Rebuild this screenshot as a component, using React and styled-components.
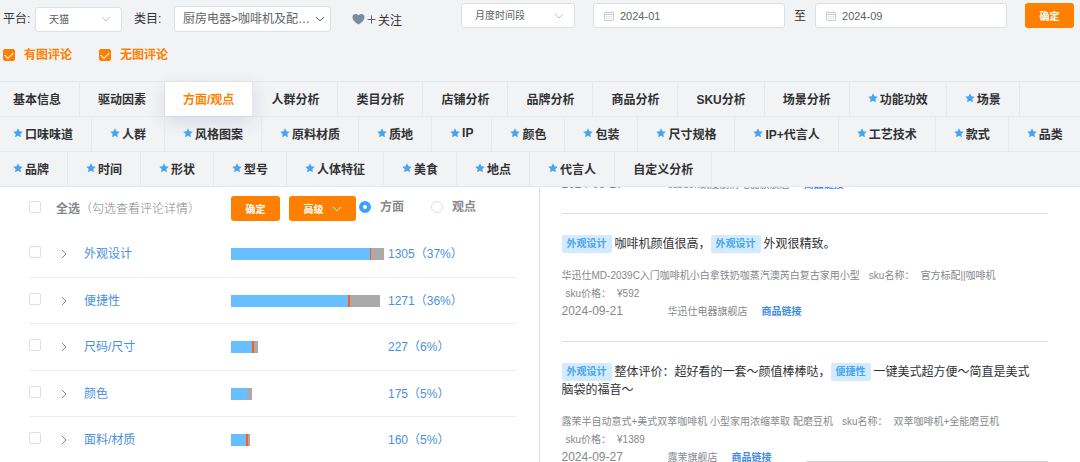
import React, { useState } from 'react';
import styled, { createGlobalStyle } from 'styled-components';

const filterTabs = [
    [
        { name: '基本信息' },
        { name: '驱动因素' },
        { name: '方面/观点' },
        { name: '人群分析' },
        { name: '类目分析' },
        { name: '店铺分析' },
        { name: '品牌分析' },
        { name: '商品分析' },
        { name: 'SKU分析' },
        { name: '场景分析' },
        { name: '功能功效', star: true },
        { name: '场景', star: true },
    ],
    [
        { name: '口味味道', star: true },
        { name: '人群', star: true },
        { name: '风格图案', star: true },
        { name: '原料材质', star: true },
        { name: '质地', star: true },
        { name: 'IP', star: true },
        { name: '颜色', star: true },
        { name: '包装', star: true },
        { name: '尺寸规格', star: true },
        { name: 'IP+代言人', star: true },
        { name: '工艺技术', star: true },
        { name: '款式', star: true },
        { name: '品类', star: true },
    ],
    [
        { name: '品牌', star: true },
        { name: '时间', star: true },
        { name: '形状', star: true },
        { name: '型号', star: true },
        { name: '人体特征', star: true },
        { name: '美食', star: true },
        { name: '地点', star: true },
        { name: '代言人', star: true },
        { name: '自定义分析' },
    ],
];

// good / bad / neutral are bar lengths
const aspects = [
    { name: '外观设计', count: 1305, percent: 37, good: 139, bad: 1, neutral: 13 },
    { name: '便捷性', count: 1271, percent: 36, good: 117, bad: 2, neutral: 30 },
    { name: '尺码/尺寸', count: 227, percent: 6, good: 21, bad: 2, neutral: 4 },
    { name: '颜色', count: 175, percent: 5, good: 16, bad: 0, neutral: 5 },
    { name: '面料/材质', count: 160, percent: 5, good: 15, bad: 2, neutral: 2 },
];

const reviews = [
    {
        parts: [{ tag: '外观设计' }, { text: '咖啡机颜值很高，' }, { tag: '外观设计' }, { text: '外观很精致。' }],
        product: '华迅仕MD-2039C入门咖啡机小白拿铁奶咖蒸汽澳芮白复古家用小型',
        sku: '官方标配||咖啡机',
        price: '¥592',
        date: '2024-09-21',
        shop: '华迅仕电器旗舰店',
    },
    {
        parts: [
            { tag: '外观设计' },
            { text: '整体评价：超好看的一套～颜值棒棒哒，' },
            { tag: '便捷性' },
            { text: '一键美式超方便～简直是美式脑袋的福音～' },
        ],
        product: '露茉半自动意式+美式双萃咖啡机 小型家用浓缩萃取 配磨豆机',
        sku: '双萃咖啡机+全能磨豆机',
        price: '¥1389',
        date: '2024-09-27',
        shop: '露茉旗舰店',
    },
];

function Chevron({ size = 10, right }) {
    return (
        <svg width={size} height={size} viewBox="0 0 10 10" fill="none" stroke="currentColor" aria-hidden="true">
            <path d={right ? 'M3 1l4 4-4 4' : 'M1 3l4 4 4-4'} />
        </svg>
    )
}

function Star() {
    return (
        <StarIcon viewBox="0 0 20 20" aria-hidden="true">
            <path d="M10 .5l2.900 6 6.600.900-4.800 4.500 1.200 6.600L10 15.400l-5.900 3.100 1.200-6.600L.5 7.400l6.600-.900z" />
        </StarIcon>
    )
}

function CalendarIcon() {
    return (
        <svg width="10" height="10" viewBox="0 0 10 10" fill="none" stroke="#c0c4cc" aria-hidden="true">
            <path d="M.5 1.5h9v8h-9zM.5 3.5h9M2.5 0v2M7.5 0v2" strokeWidth=".8" />
            <path d="M2 5.5h6M2 7.5h6" strokeDasharray="1.2 1.2" strokeWidth=".8" />
        </svg>
    )
}

function MonthField({ label, value }) {
    return (
        <MonthBox>
            <CalendarIcon />
            <MonthInput aria-label={label} defaultValue={value} />
        </MonthBox>
    )
}

function ReviewFooter({ date, shop }) {
    return (
        <Footer>
            <DateText>{date}</DateText>
            <span>{shop}</span>
            <ProductLink href="#">商品链接</ProductLink>
        </Footer>
    )
}

function Review({ review }) {
    return (
        <ReviewItem>
            <ReviewText>
                {review.parts.map((part, i) =>
                    part.tag ? <Tag key={i}>{part.tag}</Tag> : <span key={i}>{part.text}</span>
                )}
            </ReviewText>
            <ProductInfo>
                {review.product}
                <InfoField>sku名称：</InfoField>
                <InfoValue>{review.sku}</InfoValue>
                <PriceLine>
                    sku价格：
                    <InfoValue>{review.price}</InfoValue>
                </PriceLine>
            </ProductInfo>
            <ReviewFooter date={review.date} shop={review.shop} />
        </ReviewItem>
    )
}

function App() {
    const [active, setActive] = useState('方面/观点');

    return (
        <Page>
            <GlobalStyle />
            <Header>
                <Toolbar>
                    <Filters>
                        <FieldLabel htmlFor="platform">平台:</FieldLabel>
                        <SelectBox $width="87px">
                            <Select id="platform">
                                <option>天猫</option>
                            </Select>
                            <Chevron />
                        </SelectBox>
                        <CategoryLabel htmlFor="category">类目:</CategoryLabel>
                        <SelectBox $width="157px" $large>
                            <Select id="category" $large>
                                <option>厨房电器&gt;咖啡机及配…</option>
                            </Select>
                            <Chevron />
                        </SelectBox>
                        <FollowButton>
                            <svg width="13" height="12" viewBox="0 0 14 12" fill="#7b8ba1" aria-hidden="true">
                                <path d="M7 12C3.5 9.800.5 7.200.5 3.900.5 1.700 2 .5 3.800.5 5.200.5 6.300 1.100 7 2 7.700 1.100 8.800.5 10.200.5 12 .5 13.500 1.700 13.500 3.900 13.500 7.200 10.500 9.800 7 12z" />
                            </svg>
                            <svg width="9" height="9" viewBox="0 0 9 9" stroke="#606266" aria-hidden="true">
                                <path d="M4.500.5v8M.5 4.500h8" />
                            </svg>
                            关注
                        </FollowButton>
                    </Filters>
                    <Period>
                        <SelectBox $width="114px">
                            <Select aria-label="时间段">
                                <option>月度时间段</option>
                            </Select>
                            <Chevron />
                        </SelectBox>
                        <Range>
                            <MonthField label="开始月份" value="2024-01" />
                            至
                            <MonthField label="结束月份" value="2024-09" />
                        </Range>
                        <OrangeButton>确定</OrangeButton>
                    </Period>
                </Toolbar>
                <CommentTypes>
                    <TypeLabel>
                        <Checkbox defaultChecked />
                        有图评论
                    </TypeLabel>
                    <TypeLabel>
                        <Checkbox defaultChecked />
                        无图评论
                    </TypeLabel>
                </CommentTypes>
                <nav>
                    {filterTabs.map((row, i) => (
                        <TabRow key={i}>
                            {row.map((tab) => (
                                <Tab key={tab.name} $active={tab.name === active} onClick={() => setActive(tab.name)}>
                                    {tab.star && <Star />}
                                    {tab.name}
                                </Tab>
                            ))}
                        </TabRow>
                    ))}
                </nav>
            </Header>
            <Content>
                <AspectPanel>
                    <AspectToolbar>
                        <SelectAll>
                            <ListCheckbox />
                            <span><b>全选</b>（勾选查看评论详情）</span>
                        </SelectAll>
                        <OrangeButton>确定</OrangeButton>
                        <AdvancedButton>
                            高级
                            <Chevron />
                        </AdvancedButton>
                        <RadioLabel>
                            <Radio name="level" defaultChecked />
                            方面
                        </RadioLabel>
                        <RadioLabel>
                            <Radio name="level" />
                            观点
                        </RadioLabel>
                    </AspectToolbar>
                    <AspectList>
                        {aspects.map((item) => (
                            <AspectRow key={item.name}>
                                <ListCheckbox aria-label={item.name} />
                                <ExpandButton aria-label="展开">
                                    <Chevron right />
                                </ExpandButton>
                                <AspectLink href="#">{item.name}</AspectLink>
                                <Bar>
                                    <Segment $color="#67bfff" style={{ width: item.good }} />
                                    <Segment $color="#ff5a26" style={{ width: item.bad }} />
                                    <Segment $color="#aaaaaa" style={{ width: item.neutral }} />
                                </Bar>
                                <AspectLink href="#">
                                    {item.count}（{item.percent}%）
                                </AspectLink>
                            </AspectRow>
                        ))}
                    </AspectList>
                </AspectPanel>
                <ReviewPanel>
                    <ReviewList>
                        <ReviewItem $cut>
                            <ReviewFooter date="2024-09-27" shop="casdon凯度厨房电器旗舰店" />
                        </ReviewItem>
                        {reviews.map((review) => (
                            <Review key={review.shop} review={review} />
                        ))}
                    </ReviewList>
                    <Popup />
                </ReviewPanel>
            </Content>
        </Page>
    )
}

export default App

const GlobalStyle = createGlobalStyle`
    * {
        box-sizing: border-box;
    }
    body {
        margin: 0;
        background-color: white;
        color: #303133;
        font-family: "Liberation Sans", "Noto Sans CJK SC", sans-serif;
        font-size: 12px;
        line-height: 18px;
    }
    button, input, select {
        margin: 0;
        font-family: inherit;
        color: inherit;
    }
    a {
        text-decoration: none;
    }
`

const Page = styled.div`
    display: flex;
    flex-direction: column;
    height: 100vh;
    overflow: hidden;
`

const Header = styled.header`
    background-color: #f2f3f5;
`

const Toolbar = styled.div`
    display: flex;
    align-items: flex-start;
    padding: 3px 6px 0 3px;
`

const Filters = styled.div`
    display: flex;
    align-items: center;
    padding-top: 3px;
    width: 458px;
    flex-shrink: 0;
`

const FieldLabel = styled.label`
    width: 32px;
`

const CategoryLabel = styled(FieldLabel)`
    width: 40px;
    margin-left: 12px;
`

const SelectBox = styled.div`
    display: flex;
    align-items: center;
    width: ${(props) => props.$width};
    height: ${(props) => (props.$large ? 26 : 25)}px;
    padding-right: ${(props) => (props.$large ? 5 : 10)}px;
    border: 1px solid #dcdfe6;
    border-radius: 3px;
    background-color: white;
    color: ${(props) => (props.$large ? '#606266' : '#c0c4cc')};
    flex-shrink: 0;
`

const Select = styled.select`
    appearance: none;
    flex: 1;
    min-width: 0;
    padding: 0 0 0 ${(props) => (props.$large ? 8 : 13)}px;
    border: none;
    background: none;
    color: #606266;
    font-size: ${(props) => (props.$large ? 12 : 10)}px;
`

const FollowButton = styled.button`
    display: flex;
    align-items: center;
    gap: 2px;
    margin-left: 21px;
    padding: 0;
    border: none;
    background: none;
    font-size: 12px;
`

const Period = styled.div`
    display: flex;
    flex: 1;
    gap: 18px;
`

const Range = styled.div`
    display: flex;
    align-items: center;
    flex: 1;
    gap: 9px;
`

const MonthBox = styled.div`
    display: flex;
    align-items: center;
    flex: 1;
    gap: 6px;
    height: 25px;
    padding: 0 10px;
    border: 1px solid #dcdfe6;
    border-radius: 3px;
    background-color: white;
`

const MonthInput = styled.input`
    flex: 1;
    min-width: 0;
    padding: 0;
    border: none;
    outline: none;
    color: #606266;
    font-size: 11px;
`

const OrangeButton = styled.button`
    display: flex;
    align-items: center;
    justify-content: center;
    width: 49px;
    height: 25px;
    padding: 0;
    border: none;
    border-radius: 3px;
    background-color: #ff8000;
    color: white;
    font-size: 10px;
    font-weight: bold;
    cursor: pointer;
    flex-shrink: 0;
`

const AdvancedButton = styled(OrangeButton)`
    gap: 8px;
    width: 67px;
    margin-left: 9px;
`

const CommentTypes = styled.div`
    display: flex;
    gap: 27px;
    padding: 14px 3px 17px;
`

const TypeLabel = styled.label`
    display: flex;
    align-items: center;
    gap: 9px;
    color: #ff8000;
    font-weight: bold;
`

const Checkbox = styled.input.attrs({ type: 'checkbox' })`
    appearance: none;
    display: flex;
    align-items: flex-start;
    justify-content: center;
    width: 12px;
    height: 12px;
    padding-top: 2px;
    border: 1px solid #dcdfe6;
    border-radius: 2px;
    background-color: white;
    flex-shrink: 0;

    &:checked {
        border-color: #ff8000;
        background-color: #ff8000;
    }
    &:checked::after {
        content: '';
        width: 7px;
        height: 4px;
        border-left: 1px solid white;
        border-bottom: 1px solid white;
        transform: rotate(-45deg);
    }
`

const ListCheckbox = styled(Checkbox)`
    margin-bottom: 4px;
`

const TabRow = styled.div`
    display: flex;
    height: 35px;
    border-top: 1px solid #e6e8ee;

    &:last-child {
        height: 36px;
        border-bottom: 1px solid #e6e8ee;
    }
`

const Tab = styled.button`
    display: flex;
    align-items: center;
    padding: 0 18px 2px;
    border: none;
    border-right: 1px solid #e6e8ee;
    background-color: ${(props) => (props.$active ? 'white' : 'transparent')};
    box-shadow: ${(props) => (props.$active ? '0 5px 18px rgba(60, 60, 110, 0.14)' : 'none')};
    color: ${(props) => (props.$active ? '#ff8000' : '#303133')};
    font-size: 12px;
    font-weight: bold;
    white-space: nowrap;
    flex-shrink: 0;
    cursor: pointer;

    &:first-child {
        padding-left: 13px;
    }
`

const StarIcon = styled.svg`
    width: 10px;
    height: 10px;
    margin-right: 2px;
    fill: #45a5f0;
`

const Content = styled.main`
    display: flex;
    flex: 1;
    min-height: 0;
`

const AspectPanel = styled.section`
    flex: 1;
    padding: 9px 23px 0 29px;
    border-right: 1px solid #dcdfe6;
    overflow: hidden;
`

const AspectToolbar = styled.div`
    display: flex;
    align-items: center;
    color: #86888d;
`

const SelectAll = styled.label`
    display: flex;
    align-items: center;
    gap: 15px;
    width: 202px;
    font-weight: 300;
    flex-shrink: 0;
    white-space: nowrap;

    b {
        font-weight: bold;
    }
`

const RadioLabel = styled.label`
    display: flex;
    align-items: center;
    gap: 9px;
    margin: 0 24px 4px 3px;
    font-weight: bold;
    white-space: nowrap;
`

const Radio = styled.input.attrs({ type: 'radio' })`
    appearance: none;
    width: 12px;
    height: 12px;
    border: 1px solid #dcdfe6;
    border-radius: 50%;
    background-color: white;

    &:checked {
        border: 4px solid #409eff;
    }
`

const AspectList = styled.ul`
    display: grid;
    grid-auto-rows: 47px 46px;
    margin: 10px 0 0;
    padding: 0;
    list-style: none;
`

const AspectRow = styled.li`
    display: grid;
    grid-template-columns: 30px 25px 147px 157px 1fr;
    align-items: center;
    border-bottom: 1px solid #ebeef5;
`

const ExpandButton = styled.button`
    display: flex;
    padding: 0;
    border: none;
    background: none;
    color: #86888d;
    cursor: pointer;
`

const AspectLink = styled.a`
    color: #4a90e2;
    white-space: nowrap;
`

const Bar = styled.div`
    display: flex;
    height: 12px;
`

const Segment = styled.div`
    background-color: ${(props) => props.$color};
`

const ReviewPanel = styled.section`
    position: relative;
    flex: 1;
    padding: 0 32px 0 22px;
    overflow: hidden;
`

const ReviewList = styled.div`
    margin-top: -11px;
`

const ReviewItem = styled.article`
    padding: ${(props) => (props.$cut ? '0 0 20px' : '21px 0')};
    border-bottom: 1px solid #dddddd;
`

const ReviewText = styled.div`
    margin-bottom: 14px;
    padding-right: 8px;
`

const Tag = styled.span`
    display: inline-block;
    margin-right: 3px;
    padding: 0 5px;
    border-radius: 2px;
    background-color: #d4ebff;
    color: #45a5f0;
    font-size: 10px;
    font-weight: bold;
    vertical-align: top;
`

const ProductInfo = styled.div`
    color: #86888d;
    font-size: 10px;
`

const InfoField = styled.span`
    margin-left: 9px;
`

const InfoValue = styled.span`
    margin-left: 6px;
`

const PriceLine = styled.div`
    padding-left: 4px;
`

const Footer = styled.div`
    display: flex;
    align-items: center;
    color: #86888d;
    font-size: 10px;
    line-height: 17px;
`

const DateText = styled.time`
    width: 106px;
    font-size: 12px;
`

const ProductLink = styled.a`
    margin-left: 14px;
    color: #3f8ae8;
    font-weight: bold;
`

const Popup = styled.div`
    position: absolute;
    right: 32px;
    bottom: 0;
    width: 242px;
    height: 1px;
    background-color: #d4d4d4;
`
